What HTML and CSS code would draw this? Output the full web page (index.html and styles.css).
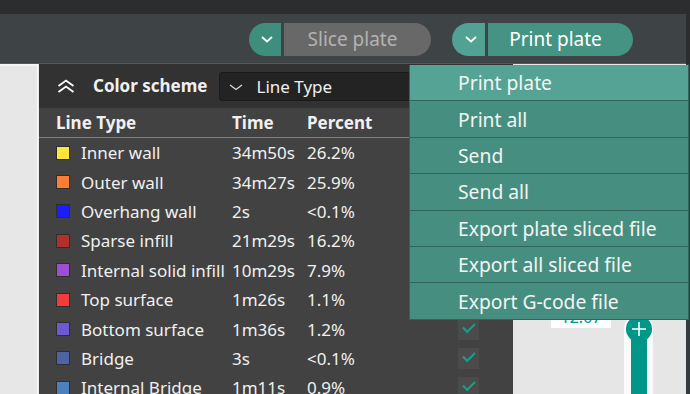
FILE: index.html
```html
<!DOCTYPE html>
<html lang="en">
    <head>
        <meta charset="UTF-8">
        <title>Slicer preview</title>
        <link rel="stylesheet" href="styles.css">
    </head>
    <body>
        <div class="app">
            <div class="titlebar"></div>
            <div class="toolbar">
                <div class="btn-group">
                    <button class="drop drop-slice">
                        <svg width="12" height="7" viewBox="0 0 12 7"><polyline points="1,1 6,5.5 11,1" fill="none" stroke="#fff" stroke-width="1.8"/></svg>
                    </button>
                    <button class="main main-slice">Slice plate</button>
                </div>
                <div class="btn-group">
                    <button class="drop drop-print">
                        <svg width="12" height="7" viewBox="0 0 12 7"><polyline points="1,1 6,5.5 11,1" fill="none" stroke="#fff" stroke-width="1.8"/></svg>
                    </button>
                    <button class="main main-print">Print plate</button>
                </div>
            </div>

            <div class="workspace">
                <div class="canvas-left"></div>

                <div class="panel">
                    <div class="scheme">
                        <svg class="collapse" width="18" height="14" viewBox="0 0 18 14">
                            <polyline points="1.5,7 9,1.5 16.5,7" fill="none" stroke="#fff" stroke-width="1.8"/>
                            <polyline points="1.5,13 9,7.5 16.5,13" fill="none" stroke="#fff" stroke-width="1.8"/>
                        </svg>
                        <span class="scheme-title">Color scheme</span>
                        <div class="combo">
                            <svg width="14" height="7" viewBox="0 0 14 7"><polyline points="1,1 7,5.5 13,1" fill="none" stroke="#ddd" stroke-width="1.2"/></svg>
                            <span>Line Type</span>
                        </div>
                    </div>

                    <div class="legend">
                        <div class="legend-head">
                            <span class="col-name">Line Type</span>
                            <span>Time</span>
                            <span>Percent</span>
                            <span></span>
                        </div>

                        <div class="legend-row">
                            <i class="swatch" style="background:#ffe43c"></i><span>Inner wall</span><span>34m50s</span><span>26.2%</span><b class="check"></b>
                        </div>
                        <div class="legend-row">
                            <i class="swatch" style="background:#ff7d33"></i><span>Outer wall</span><span>34m27s</span><span>25.9%</span><b class="check"></b>
                        </div>
                        <div class="legend-row">
                            <i class="swatch" style="background:#1c1cff"></i><span>Overhang wall</span><span>2s</span><span>&lt;0.1%</span><b class="check"></b>
                        </div>
                        <div class="legend-row">
                            <i class="swatch" style="background:#b0302b"></i><span>Sparse infill</span><span>21m29s</span><span>16.2%</span><b class="check"></b>
                        </div>
                        <div class="legend-row">
                            <i class="swatch" style="background:#9a50d0"></i><span>Internal solid infill</span><span>10m29s</span><span>7.9%</span><b class="check"></b>
                        </div>
                        <div class="legend-row">
                            <i class="swatch" style="background:#f23b3b"></i><span>Top surface</span><span>1m26s</span><span>1.1%</span><b class="check"></b>
                        </div>
                        <div class="legend-row">
                            <i class="swatch" style="background:#6c5ad0"></i><span>Bottom surface</span><span>1m36s</span><span>1.2%</span><b class="check"></b>
                        </div>
                        <div class="legend-row">
                            <i class="swatch" style="background:#4d63a3"></i><span>Bridge</span><span>3s</span><span>&lt;0.1%</span><b class="check"></b>
                        </div>
                        <div class="legend-row">
                            <i class="swatch" style="background:#4e80c0"></i><span>Internal Bridge</span><span>1m11s</span><span>0.9%</span><b class="check"></b>
                        </div>
                    </div>
                </div>

                <div class="canvas-right"></div>
                <div class="edge"></div>

                <div class="layer-tip">12:07</div>
                <div class="slider">
                    <div class="slider-fill"></div>
                    <div class="slider-knob">
                        <svg width="16" height="16" viewBox="0 0 16 16"><path d="M8 1v14M1 8h14" stroke="#fff" stroke-width="1.6"/></svg>
                    </div>
                </div>
            </div>

            <ul class="menu">
                <li class="active">Print plate</li>
                <li>Print all</li>
                <li>Send</li>
                <li>Send all</li>
                <li>Export plate sliced file</li>
                <li>Export all sliced file</li>
                <li>Export G-code file</li>
            </ul>
        </div>
    </body>
</html>
```

FILE: styles.css
```css
body {
    margin: 0;
    width: 690px;
    height: 394px;
    overflow: hidden;
    background-color: #2c2d2f;
    font-family: 'Noto Sans', sans-serif;
}

.app {
    position: relative;
    height: 394px;
    display: flex;
    flex-direction: column;
}

.titlebar {
    height: 14px;
    flex-shrink: 0;
    background-color: #2c2d2f;
}

.toolbar {
    height: 49px;
    flex-shrink: 0;
    background-color: #3e4345;
    border-bottom: 1px solid #56595b;
    margin-right: 4px;
    display: flex;
    justify-content: flex-end;
    align-items: center;
    gap: 21px;
    padding-right: 53px;
}

.btn-group {
    display: flex;
    gap: 3px;
    height: 33px;
    margin-top: 2px;
}

button {
    border: none;
    padding: 0;
    font-family: inherit;
    cursor: pointer;
}

.drop {
    width: 33px;
    border-radius: 17px 0 0 17px;
    display: flex;
    align-items: center;
    justify-content: center;
    padding-left: 4px;
}

.drop-slice {
    width: 32px;
    background-color: #3e8e7e;
}

.drop-print {
    background-color: #52a293;
}

.main {
    border-radius: 0 17px 17px 0;
    font-size: 19px;
    padding-bottom: 2px;
    padding-right: 10px;
}

.main-slice {
    width: 147px;
    background-color: #686868;
    color: #b3b3b3;
}

.main-print {
    width: 145px;
    background-color: #459483;
    color: #ffffff;
}

.workspace {
    position: relative;
    flex: 1;
    min-height: 0;
    overflow: hidden;
    display: flex;
    background-color: #e6e6e6;
}

.canvas-left {
    width: 37px;
    border-right: 1px solid #fafafa;
    border-top: 2px solid #f4f4f4;
    background-color: #e7e7e7;
}

.panel {
    width: 474px;
    flex-shrink: 0;
    margin-left: 1px;
    background-color: #424242;
    color: #f0f0f0;
}

.canvas-right {
    flex: 1;
    background-color: #e6e6e6;
}

.edge {
    width: 4px;
    background-color: #323a3e;
}

.scheme {
    height: 44px;
    background-color: #323232;
    display: flex;
    align-items: center;
    padding-left: 18px;
}

.scheme-title {
    font-weight: bold;
    font-size: 17px;
    margin-left: 18px;
    margin-bottom: 2px;
}

.combo {
    margin-left: 12px;
    width: 260px;
    height: 27px;
    background-color: #232323;
    border: 1px solid #1a1a1a;
    border-radius: 3px;
    display: flex;
    align-items: center;
    padding-left: 9px;
    gap: 13px;
    font-size: 17px;
    color: #f0f0f0;
}

.combo svg {
    margin-top: 2px;
}

.legend-head,
.legend-row {
    display: grid;
    grid-template-columns: 25px 151px 75px 151px 21px;
    align-items: center;
    padding-left: 17px;
    font-size: 17px;
}

.legend-head {
    height: 29px;
    font-weight: bold;
    border-bottom: 1px solid #7e7e7e;
}

.legend-head .col-name {
    grid-column: span 2;
}

.legend-row {
    height: 29.4px;
}

.swatch {
    display: block;
    width: 12px;
    height: 12px;
    border: 1px solid #2e2e2e;
}

.check {
    width: 21px;
    height: 21px;
    background-color: #4b4b4b;
    position: relative;
}

.check::after {
    content: '';
    position: absolute;
    left: 5px;
    top: 4px;
    width: 10px;
    height: 5px;
    border-left: 2.5px solid #14a08d;
    border-bottom: 2.5px solid #14a08d;
    transform: rotate(-45deg);
}

.layer-tip {
    position: absolute;
    left: 551px;
    top: 234px;
    width: 60px;
    height: 30px;
    background-color: #ffffff;
    color: #009688;
    font-size: 16px;
    text-align: center;
    line-height: 38px;
}

.slider {
    position: absolute;
    left: 624px;
    top: 250px;
    width: 29px;
    height: 90px;
    background-color: #fafafa;
    border-radius: 15px 15px 0 0;
}

.slider-fill {
    position: absolute;
    left: 7px;
    top: 20px;
    width: 16px;
    bottom: 0;
    background-color: #009688;
}

.slider-knob {
    position: absolute;
    left: 2px;
    top: 2px;
    width: 26px;
    height: 26px;
    border-radius: 50%;
    background-color: #009688;
    display: flex;
    align-items: center;
    justify-content: center;
}

.menu {
    position: absolute;
    left: 409px;
    top: 65px;
    width: 278px;
    margin: 0;
    padding: 0;
    list-style: none;
    background-color: #2f655b;
    border: 1px solid #2f655b;
    border-top: none;
}

.menu li {
    height: 35.4px;
    margin-bottom: 1px;
    background-color: #468f80;
    color: #f4f4f4;
    font-size: 19.3px;
    padding-left: 48px;
    box-sizing: border-box;
    display: flex;
    align-items: center;
}

.menu li:last-child {
    margin-bottom: 0;
}

.menu li.active {
    background-color: #54a395;
}
```
